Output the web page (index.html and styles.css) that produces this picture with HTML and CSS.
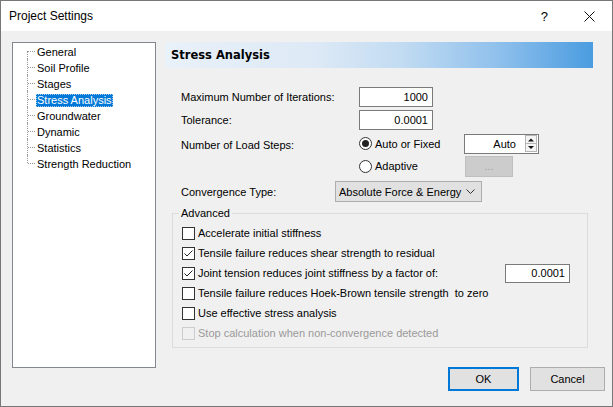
FILE: index.html
```html
<!DOCTYPE html>
<html lang="en">
<head>
  <meta charset="UTF-8" />
  <title>Project Settings</title>
  <link rel="stylesheet" href="styles.css">
</head>
<body>
  <div class="window">
    <div class="titlebar">
      <span class="title">Project Settings</span>
      <span class="help">?</span>
      <span class="close">
        <svg width="11" height="11" viewBox="0 0 11 11"><path d="M0.5 0.5L10.5 10.5M10.5 0.5L0.5 10.5" stroke="#111" stroke-width="1" fill="none"/></svg>
      </span>
    </div>
    <div class="content">
      <ul class="tree">
        <li><span>General</span></li>
        <li><span>Soil Profile</span></li>
        <li><span>Stages</span></li>
        <li><span class="selected">Stress Analysis</span></li>
        <li><span>Groundwater</span></li>
        <li><span>Dynamic</span></li>
        <li><span>Statistics</span></li>
        <li><span>Strength Reduction</span></li>
      </ul>
      <div class="panel">
        <div class="panel-head">Stress Analysis</div>

        <div class="row row-iter">
          <label class="lbl-wide">Maximum Number of Iterations:</label>
          <div class="input">1000</div>
        </div>
        <div class="row row-tol">
          <label class="lbl-wide">Tolerance:</label>
          <div class="input">0.0001</div>
        </div>

        <div class="row row-steps">
          <label class="lbl-wide lbl-steps">Number of Load Steps:</label>
          <div class="radios">
            <div class="radio-row radio-a">
              <span class="radio on"></span><span class="radio-text">Auto or Fixed</span>
              <div class="spin">
                <span class="spin-val">Auto</span>
                <span class="spin-btns">
                  <svg width="12" height="17" viewBox="0 0 12 17">
                    <rect x="0.5" y="0.5" width="11" height="16" fill="#f4f4f4" stroke="#b5b5b5"/>
                    <line x1="0.5" y1="8.5" x2="11.5" y2="8.5" stroke="#b5b5b5"/>
                    <path d="M3 6.5h6l-3-3z" fill="#111"/>
                    <path d="M3 11h6l-3 3z" fill="#111"/>
                  </svg>
                </span>
              </div>
            </div>
            <div class="radio-row radio-b">
              <span class="radio"></span><span class="radio-text">Adaptive</span>
              <div class="btn-dots">...</div>
            </div>
          </div>
        </div>

        <div class="row row-conv">
          <label class="lbl-narrow">Convergence Type:</label>
          <div class="select">
            <span>Absolute Force &amp; Energy</span>
            <svg width="9" height="6" viewBox="0 0 9 6"><path d="M0.5 0.5L4.5 4.5L8.5 0.5" stroke="#333" fill="none"/></svg>
          </div>
        </div>

        <fieldset class="advanced">
          <legend>Advanced</legend>
          <div class="check-row"><span class="box"></span>Accelerate initial stiffness</div>
          <div class="check-row"><span class="box checked"><svg width="11" height="11" viewBox="0 0 11 11"><path d="M1.5 5.5L4 8L9.5 2.5" stroke="#222" fill="none"/></svg></span>Tensile failure reduces shear strength to residual</div>
          <div class="check-row"><span class="box checked"><svg width="11" height="11" viewBox="0 0 11 11"><path d="M1.5 5.5L4 8L9.5 2.5" stroke="#222" fill="none"/></svg></span>Joint tension reduces joint stiffness by a factor of:<div class="input input-factor">0.0001</div></div>
          <div class="check-row"><span class="box"></span>Tensile failure reduces Hoek-Brown tensile strength&nbsp; to zero</div>
          <div class="check-row"><span class="box"></span>Use effective stress analysis</div>
          <div class="check-row disabled"><span class="box"></span>Stop calculation when non-convergence detected</div>
        </fieldset>

        <div class="footer">
          <button class="btn btn-ok">OK</button>
          <button class="btn btn-cancel">Cancel</button>
        </div>
      </div>
    </div>
  </div>
</body>
</html>
```

FILE: styles.css
```css
body {
  margin: 0;
  font-family: "Liberation Sans", Arial, sans-serif;
  font-size: 11px;
  color: #000;
  background: #fff;
  overflow: hidden;
}
.window {
  width: 613px;
  height: 407px;
  box-sizing: border-box;
  border: 1px solid #777;
  background: #f0f0f0;
  display: flex;
  flex-direction: column;
}
.titlebar {
  height: 30px;
  background: #fff;
  display: flex;
  align-items: center;
  padding: 0 17px 0 8px;
}
.title {
  font-size: 12px;
}
.help {
  margin-left: auto;
  font-size: 13px;
  margin-right: 36px;
}
.close {
  display: flex;
}
.content {
  display: flex;
  padding: 11px 6px 0 11px;
}
.tree {
  list-style: none;
  margin: 0;
  padding: 0;
  width: 144px;
  height: 326px;
  box-sizing: border-box;
  border: 1px solid #828790;
  background: #fff;
}
.tree li {
  position: relative;
  height: 16px;
  line-height: 16px;
  padding-left: 23px;
}
.tree li::before {
  content: "";
  position: absolute;
  left: 15px;
  top: 8px;
  width: 7px;
  border-top: 1px dotted #9a9a9a;
}
.tree li::after {
  content: "";
  position: absolute;
  left: 14px;
  top: 0;
  bottom: 0;
  border-left: 1px dotted #9a9a9a;
}
.tree li:first-child::after {
  top: 8px;
}
.tree li:last-child::after {
  bottom: 8px;
}
.tree li span {
  display: inline-block;
  padding: 0 1px;
  line-height: 13px;
  vertical-align: middle;
}
.tree li span.selected {
  background: #0078d7;
  color: #fff;
  outline: 1px dotted #9cc8ee;
  outline-offset: -1px;
}
.panel {
  margin-left: 9px;
  width: 440px;
  height: 349px;
  display: flex;
  flex-direction: column;
}
.panel-head {
  height: 26px;
  line-height: 26px;
  width: 428px;
  padding-left: 6px;
  box-sizing: border-box;
  font-family: "DejaVu Sans", Verdana, sans-serif;
  font-weight: bold;
  font-size: 11.5px;
  background: linear-gradient(to right, #e9f1f9 0%, #dde9f6 35%, #c2dcf2 55%, #8fc0ec 78%, #4a9ce0 100%);
}
.row {
  display: flex;
  align-items: center;
  padding-left: 16px;
}
.lbl-wide {
  width: 178px;
}
.lbl-narrow {
  width: 154px;
}
.row-iter {
  margin-top: 19px;
  height: 20px;
}
.row-tol {
  margin-top: 3px;
  height: 20px;
}
.input {
  width: 74px;
  height: 20px;
  box-sizing: border-box;
  border: 1px solid #7a7a7a;
  background: #fff;
  text-align: right;
  padding-right: 4px;
  line-height: 18px;
}
.row-steps {
  margin-top: 3px;
  align-items: flex-start;
}
.lbl-steps {
  margin-top: 6px;
}
.radio-row {
  display: flex;
  align-items: center;
}
.radio-a {
  height: 21px;
}
.radio-b {
  height: 22px;
  margin-top: 1px;
}
.radio {
  width: 13px;
  height: 13px;
  box-sizing: border-box;
  border: 1px solid #333;
  border-radius: 50%;
  background: #fff;
  display: flex;
  align-items: center;
  justify-content: center;
}
.radio.on::after {
  content: "";
  width: 7px;
  height: 7px;
  border-radius: 50%;
  background: #222;
}
.radio-text {
  margin-left: 3px;
  width: 89px;
}
.spin {
  width: 75px;
  height: 20px;
  box-sizing: border-box;
  border: 1px solid #7a7a7a;
  background: #fff;
  display: flex;
  align-items: center;
}
.spin-val {
  flex: 1;
  text-align: right;
  padding-right: 9px;
}
.spin-btns {
  display: flex;
  margin-right: 1px;
}
.btn-dots {
  margin-left: 1px;
  width: 48px;
  height: 21px;
  box-sizing: border-box;
  border: 1px solid #bfbfbf;
  background: #cccccc;
  color: #a0a0a0;
  font-size: 10px;
  text-align: center;
  line-height: 19px;
}
.row-conv {
  margin-top: 4px;
  height: 21px;
}
.select {
  width: 147px;
  height: 21px;
  box-sizing: border-box;
  border: 1px solid #adadad;
  background: #e1e1e1;
  display: flex;
  align-items: center;
  justify-content: space-between;
  padding: 0 6px 0 3px;
}
.advanced {
  margin: 5px 17px 0 7px;
  border: 1px solid #dcdcdc;
  padding: 3px 0 4px 9px;
  min-width: 0;
}
.advanced legend {
  padding: 0 2px;
  margin-left: -3px;
  line-height: 13px;
}
.check-row {
  display: flex;
  align-items: center;
  height: 20px;
}
.box {
  width: 13px;
  height: 13px;
  box-sizing: border-box;
  border: 1px solid #333;
  background: #fff;
  margin-right: 3px;
  display: flex;
  align-items: center;
  justify-content: center;
}
.input-factor {
  width: 65px;
  height: 19px;
  line-height: 17px;
  margin-left: auto;
  margin-right: 17px;
}
.check-row.disabled {
  color: #9a9a9a;
}
.check-row.disabled .box {
  border-color: #cccccc;
  background: #f0f0f0;
}
.footer {
  margin-top: auto;
  display: flex;
  justify-content: flex-end;
  gap: 11px;
}
.btn {
  height: 24px;
  box-sizing: border-box;
  background: #e1e1e1;
  border: 1px solid #adadad;
  font-family: "Liberation Sans", Arial, sans-serif;
  font-size: 11px;
  color: #000;
  padding: 0;
}
.btn-ok {
  width: 71px;
  border: 2px solid #0078d7;
}
.btn-cancel {
  width: 75px;
}
```
